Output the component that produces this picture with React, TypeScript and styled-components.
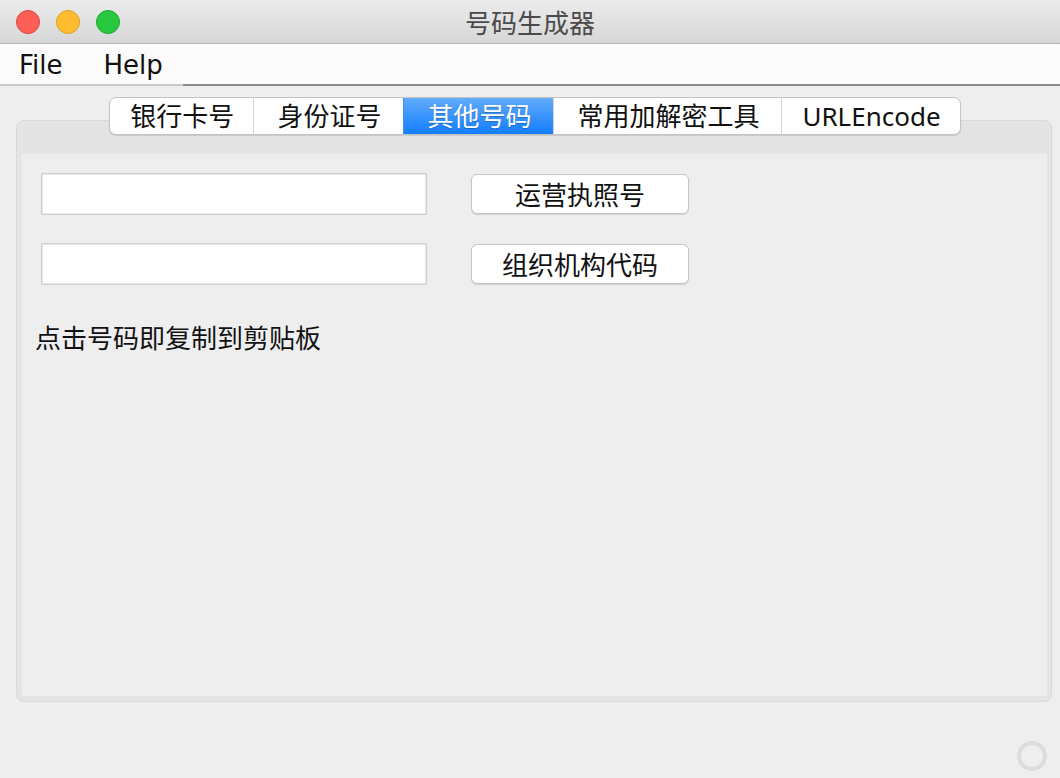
import React from "react";
import styled, { createGlobalStyle, css } from "styled-components";

const FONT = `"Noto Sans", "Noto Sans CJK SC", sans-serif`;

const GlobalStyle = createGlobalStyle`
  html, body { margin: 0; padding: 0; background: #eeeeee; }
  body { font-family: ${FONT}; }
  * { box-sizing: border-box; }
`;

const Window = styled.div`
  width: 1060px;
  height: 778px;
  display: flex;
  flex-direction: column;
  background: #eeeeee;
  overflow: hidden;
`;

const TitleBar = styled.div`
  height: 44px;
  display: grid;
  grid-template-columns: 1fr auto 1fr;
  align-items: center;
  background: linear-gradient(#ececec, #d6d6d6);
  border-bottom: 1px solid #b5b5b5;
`;

const Lights = styled.div`
  display: flex;
  gap: 16px;
  padding-left: 16px;
`;

const Light = styled.span<{ $c: string; $b: string }>`
  width: 24px;
  height: 24px;
  border-radius: 50%;
  background: ${(p) => p.$c};
  border: 1px solid ${(p) => p.$b};
`;

const Title = styled.div`
  font-family: "Noto Sans CJK SC", sans-serif;
  font-size: 26px;
  color: #4a4a4a;
  line-height: 44px;
`;

const MenuBar = styled.div`
  height: 42px;
  display: flex;
  background: #fbfbfb;
`;

const MenuList = styled.div`
  display: flex;
  border-bottom: 2px solid #c9c9c9;
`;

const MenuItem = styled.div<{ $first?: boolean }>`
  padding: 3px 20px 0 ${(p) => (p.$first ? "19px" : "21px")};
  font-family: "DejaVu Sans", sans-serif;
  font-size: 26px;
  line-height: 37px;
  color: #111;
`;

const MenuFill = styled.div`
  flex: 1;
  border-bottom: 2px solid #8c8c8c;
`;

const Body = styled.div`
  flex: 1;
  display: flex;
  flex-direction: column;
  padding: 11px 8px 0 16px;
`;

const Tabs = styled.div`
  position: relative;
  z-index: 1;
  align-self: center;
  margin-left: 2px;
  display: flex;
  height: 38px;
  border: 1px solid #c3c3c3;
  border-radius: 7px;
  background: #ffffff;
  box-shadow: 0 1px 1px rgba(0, 0, 0, 0.12);
  overflow: hidden;
`;

const Tab = styled.div<{ $active?: boolean; $first?: boolean; $last?: boolean }>`
  padding: 0 22px 0 23px;
  ${(p) => p.$first && css`padding: 0 19px 0 20px;`}
  ${(p) => p.$last && css`padding: 0 19px 0 20px;`}
  font-size: 26px;
  line-height: 36px;
  color: #111;
  white-space: nowrap;
  & + & { border-left: 1px solid #d6d6d6; }
  ${(p) =>
    p.$active &&
    css`
      background: linear-gradient(#63abfb, #127efd);
      color: #ffffff;
      text-shadow: 0 1px 1px rgba(0, 0, 0, 0.25);
      border-left-color: #3d8ff5 !important;
    `}
`;

const Panel = styled.div`
  margin-top: -15px;
  height: 582px;
  border: 1px solid #d9d9d9;
  border-radius: 8px;
  background: #e4e4e4;
  padding: 33px 4px 5px 5px;
  display: flex;
`;

const Content = styled.div`
  flex: 1;
  background: #eeeeee;
  padding: 19px 19px;
  display: flex;
  flex-direction: column;
  gap: 28px;
`;

const Row = styled.div`
  display: flex;
  align-items: center;
  gap: 44px;
`;

const Field = styled.input`
  width: 386px;
  height: 42px;
  border: 1px solid #cfcfcf;
  box-shadow: inset 0 0 0 1px #e8e8e8;
  background: #ffffff;
  font-family: ${FONT};
  font-size: 24px;
  outline: none;
  padding: 0 8px;
`;

const Button = styled.button`
  width: 218px;
  height: 40px;
  border: 1px solid #c4c4c4;
  border-radius: 6px;
  background: #ffffff;
  box-shadow: 0 1px 1px rgba(0, 0, 0, 0.12);
  font-family: "Noto Sans CJK SC", sans-serif;
  font-size: 26px;
  line-height: 38px;
  color: #111;
  padding: 0;
`;

const Hint = styled.div`
  margin-top: 6px;
  margin-left: -6px;
  font-family: "Noto Sans CJK SC", sans-serif;
  font-size: 26px;
  line-height: 36px;
  color: #111;
`;

const Footer = styled.div`
  display: flex;
  justify-content: flex-end;
  margin-top: 39px;
  padding-right: 5px;
`;

const Grip = styled.span`
  width: 30px;
  height: 30px;
  border-radius: 50%;
  border: 4px solid #dcdce0;
`;

export default function App() {
  const tabs = ["银行卡号", "身份证号", "其他号码", "常用加解密工具", "URLEncode"];
  return (
    <>
      <GlobalStyle />
      <Window>
        <TitleBar>
          <Lights>
            <Light $c="#fe5f57" $b="#e0443e" />
            <Light $c="#febc2e" $b="#dea123" />
            <Light $c="#28c840" $b="#1aab29" />
          </Lights>
          <Title>号码生成器</Title>
          <div />
        </TitleBar>
        <MenuBar>
          <MenuList>
            <MenuItem $first>File</MenuItem>
            <MenuItem>Help</MenuItem>
          </MenuList>
          <MenuFill />
        </MenuBar>
        <Body>
          <Tabs>
            {tabs.map((t, i) => (
              <Tab key={t} $first={i === 0} $last={i === tabs.length - 1} $active={i === 2}>
                {t}
              </Tab>
            ))}
          </Tabs>
          <Panel>
            <Content>
              <Row>
                <Field />
                <Button>运营执照号</Button>
              </Row>
              <Row>
                <Field />
                <Button>组织机构代码</Button>
              </Row>
              <Hint>点击号码即复制到剪贴板</Hint>
            </Content>
          </Panel>
          <Footer>
            <Grip />
          </Footer>
        </Body>
      </Window>
    </>
  );
}
